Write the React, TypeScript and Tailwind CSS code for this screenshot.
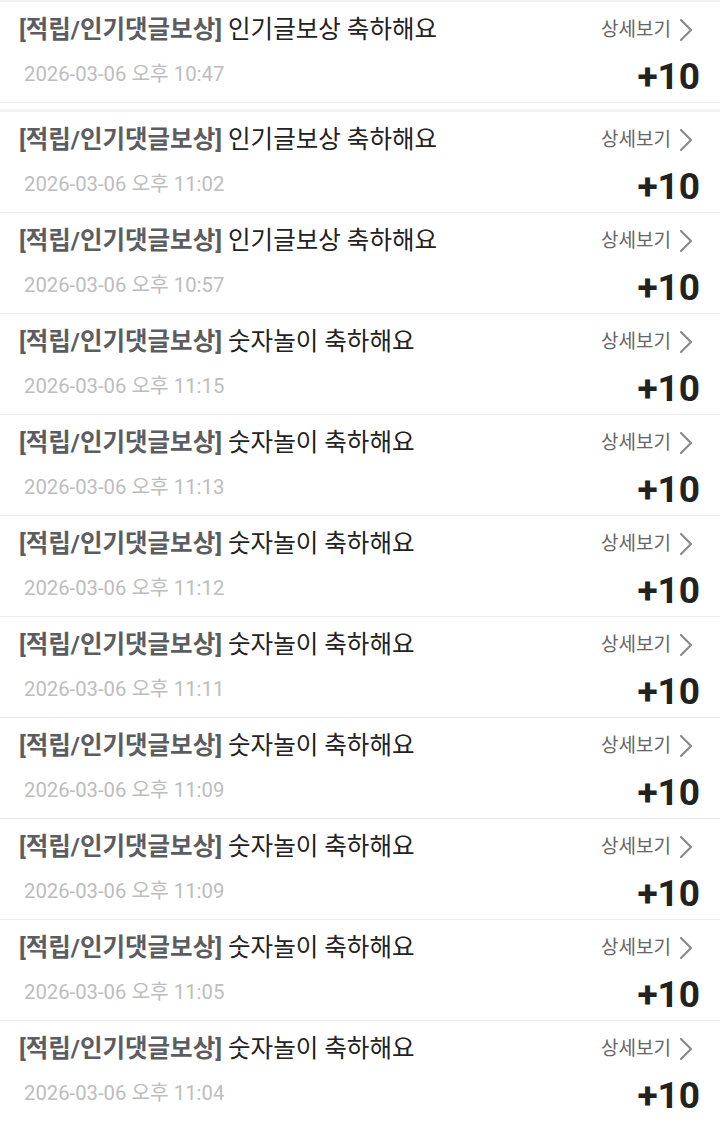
import React from 'react';

type Reward = {
  id: number;
  title: string;
  date: string;
};

const rewards: Reward[] = [
  { id: 1, title: '인기글보상 축하해요', date: '2026-03-06 오후 11:02' },
  { id: 2, title: '인기글보상 축하해요', date: '2026-03-06 오후 10:57' },
  { id: 3, title: '숫자놀이 축하해요', date: '2026-03-06 오후 11:15' },
  { id: 4, title: '숫자놀이 축하해요', date: '2026-03-06 오후 11:13' },
  { id: 5, title: '숫자놀이 축하해요', date: '2026-03-06 오후 11:12' },
  { id: 6, title: '숫자놀이 축하해요', date: '2026-03-06 오후 11:11' },
  { id: 7, title: '숫자놀이 축하해요', date: '2026-03-06 오후 11:09' },
  { id: 8, title: '숫자놀이 축하해요', date: '2026-03-06 오후 11:09' },
  { id: 9, title: '숫자놀이 축하해요', date: '2026-03-06 오후 11:05' },
  { id: 10, title: '숫자놀이 축하해요', date: '2026-03-06 오후 11:04' },
];

const Chevron = () => (
  <svg width="14" height="24" viewBox="0 0 14 24" fill="none" className="ml-[8px]">
    <path d="M2 2 L12 12 L2 22" stroke="#8a8a8a" strokeWidth="2.2" strokeLinecap="round" strokeLinejoin="round" />
  </svg>
);

const RewardRow: React.FC<{ item: Reward; last?: boolean }> = ({ item, last }) => (
  <div className={`h-[101px] px-[19px] pr-[20px] flex flex-col ${last ? '' : 'border-b border-[#ececec]'}`}>
    <div className="flex items-center justify-between h-[56px]">
      <div className="text-[24.5px] leading-none">
        <span className="font-bold text-[#5b5d60]">[적립/인기댓글보상]</span>{' '}
        <span className="text-[#222]">{item.title}</span>
      </div>
      <div className="flex items-center text-[19px] text-[#666] mr-[7px]">
        상세보기
        <Chevron />
      </div>
    </div>
    <div className="flex items-center justify-between h-[32px]">
      <span className="pl-[5px] text-[20.3px] text-[#bdbdbd] leading-none">{item.date}</span>
      <span className="text-[37px] font-bold text-[#222] leading-none mt-[4px]">+10</span>
    </div>
  </div>
);

export default function App() {
  return (
    <div className="w-[720px] min-h-[1125px] bg-white overflow-hidden" style={{ fontFamily: 'Roboto, "Noto Sans CJK KR", sans-serif' }}>
      <div className="border-t-2 border-[#f2f2f2]">
        <RewardRow item={{ id: 0, title: '인기글보상 축하해요', date: '2026-03-06 오후 10:47' }} />
      </div>
      <div className="h-[6px] bg-white" />
      <div className="border-t-[3px] border-[#f3f3f3]">
        {rewards.map((r, i) => (
          <RewardRow key={r.id} item={r} last={i === rewards.length - 1} />
        ))}
      </div>
    </div>
  );
}
